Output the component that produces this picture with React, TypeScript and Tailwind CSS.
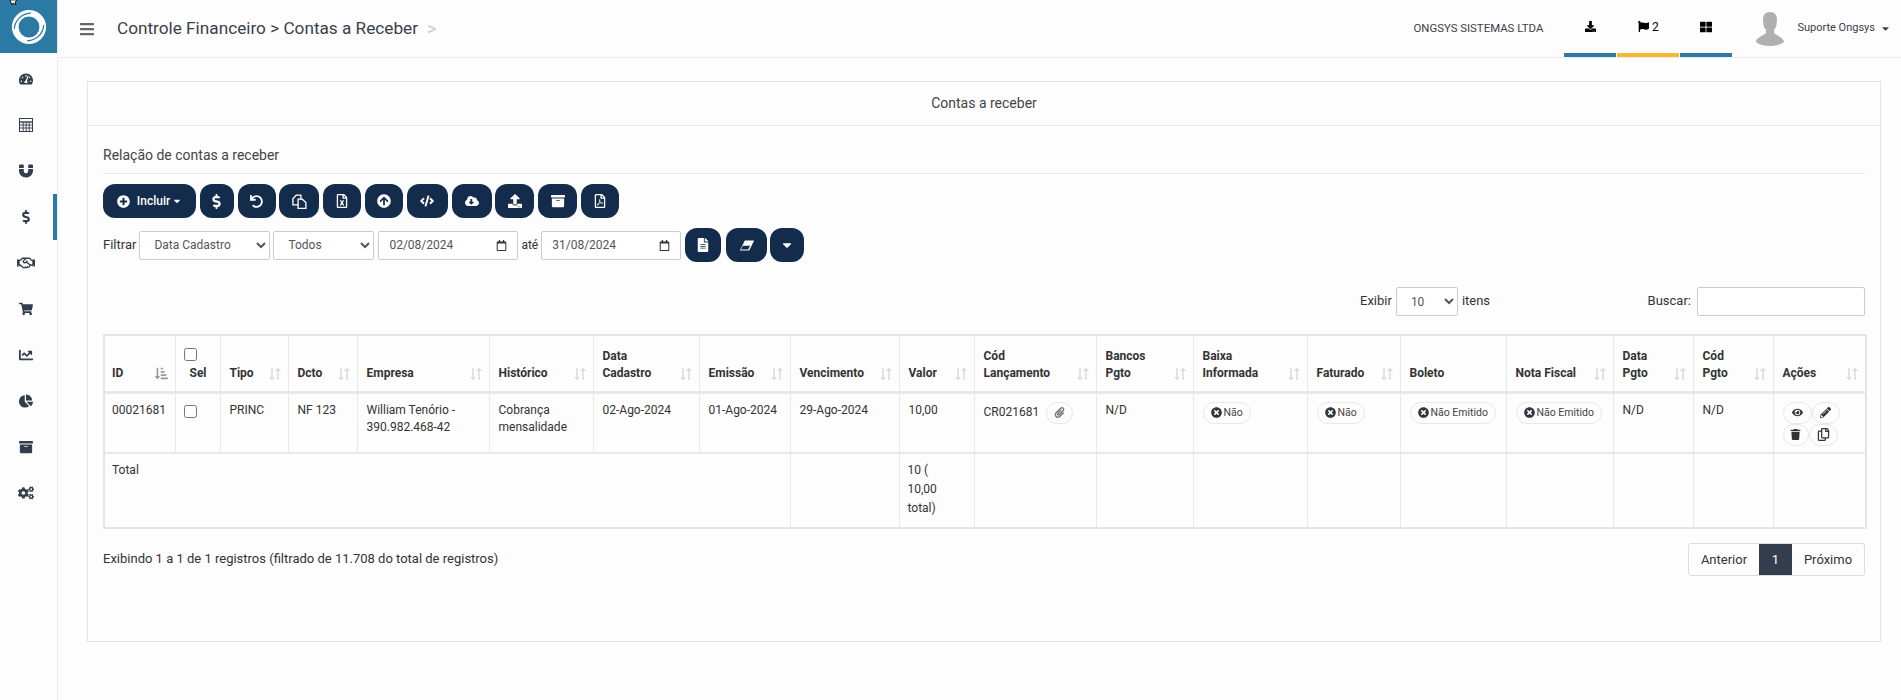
import type { ReactNode } from "react";
import {
  FaArchive,
  FaArrowCircleUp,
  FaBars,
  FaCaretDown,
  FaChartLine,
  FaChartPie,
  FaCloudDownloadAlt,
  FaCode,
  FaCogs,
  FaDollarSign,
  FaDownload,
  FaEye,
  FaFileAlt,
  FaFlag,
  FaMagnet,
  FaPaperclip,
  FaPencilAlt,
  FaPlusCircle,
  FaRegCalendar,
  FaRegCopy,
  FaRegFileExcel,
  FaRegFilePdf,
  FaRegHandshake,
  FaShoppingCart,
  FaTachometerAlt,
  FaThLarge,
  FaTimesCircle,
  FaTrash,
  FaUndo,
  FaUpload,
  FaSortAmountDownAlt,
} from "react-icons/fa";

function CalcIcon() {
  return (
    <svg viewBox="0 0 14 14" className="h-[14px] w-[14px]" fill="none" stroke="currentColor">
      <rect x="0.5" y="0.5" width="13" height="13" strokeWidth="1" />
      <path d="M1 4h12" strokeWidth="1.4" />
      <path d="M1 7h12M1 10h12M4.2 4v9.5M7.2 4v9.5M10.2 4v9.5" strokeWidth="0.9" />
    </svg>
  );
}

function DuplicateIcon() {
  return (
    <svg viewBox="0 0 16 16" className="h-[15px] w-[15px]" fill="none" stroke="#fff" strokeWidth="1.4">
      <path d="M1 5 4.5 1.2H9.5V11.5H1z" />
      <path d="M6.5 5.5h4.5L14.8 9v6.3H6.5z" fill="#132c4c" />
    </svg>
  );
}

function EraserIcon() {
  return (
    <svg viewBox="0 0 18 12" className="h-[11px] w-[16px]">
      <path d="M6.5.5H17l-5.5 11H1z" fill="#fff" />
      <path d="M4.3 6.2h8.2L10.3 10.4H2.3z" fill="#132c4c" />
    </svg>
  );
}

const sideItems = [
  { icon: <FaTachometerAlt />, id: "dash" },
  { icon: <CalcIcon />, id: "calc" },
  { icon: <FaMagnet />, id: "crm" },
  { icon: <FaDollarSign />, id: "fin", active: true },
  { icon: <FaRegHandshake className="text-[18px]" />, id: "deal" },
  { icon: <FaShoppingCart />, id: "cart" },
  { icon: <FaChartLine />, id: "chart" },
  { icon: <FaChartPie />, id: "pie" },
  { icon: <FaArchive />, id: "box" },
  { icon: <FaCogs className="text-[16px]" />, id: "cogs" },
];

const toolbar = [
  { icon: <FaDollarSign className="text-[15px]" />, w: "w-[34px]" },
  { icon: <FaUndo className="text-[13px]" />, w: "w-[38px]" },
  { icon: <DuplicateIcon />, w: "w-[40px]" },
  { icon: <FaRegFileExcel />, w: "w-[38px]" },
  { icon: <FaArrowCircleUp />, w: "w-[38px]" },
  { icon: <FaCode />, w: "w-[41px]" },
  { icon: <FaCloudDownloadAlt />, w: "w-[40px]" },
  { icon: <FaUpload />, w: "w-[39px]" },
  { icon: <FaArchive />, w: "w-[39px]" },
  { icon: <FaRegFilePdf />, w: "w-[38px]" },
];

const colWidths = [
  "w-[71px]",
  "w-[45px]",
  "w-[68px]",
  "w-[69px]",
  "w-[132px]",
  "w-[104px]",
  "w-[106px]",
  "w-[91px]",
  "w-[109px]",
  "w-[75px]",
  "w-[122px]",
  "w-[97px]",
  "w-[114px]",
  "w-[93px]",
  "w-[106px]",
  "w-[107px]",
  "w-[80px]",
  "w-[80px]",
  "w-[93px]",
];

const headers = [
  ["ID"],
  ["Sel"],
  ["Tipo"],
  ["Dcto"],
  ["Empresa"],
  ["Histórico"],
  ["Data", "Cadastro"],
  ["Emissão"],
  ["Vencimento"],
  ["Valor"],
  ["Cód", "Lançamento"],
  ["Bancos", "Pgto"],
  ["Baixa", "Informada"],
  ["Faturado"],
  ["Boleto"],
  ["Nota Fiscal"],
  ["Data", "Pgto"],
  ["Cód", "Pgto"],
  ["Ações"],
];

function SortIcon() {
  return (
    <svg viewBox="0 0 12 14" className="mb-[1px] h-[14px] w-[12px] shrink-0 text-[#dcdcdc]" fill="currentColor">
      <path d="M2.2 1h1.6v9H6l-3 3.4L0 10h2.2z" />
      <path d="M8.2 13h1.6V4H12L9 .6 6 4h2.2z" />
    </svg>
  );
}

function Logo() {
  return (
    <svg viewBox="0 0 40 40" className="h-[38px] w-[38px]" fill="none">
      <path
        fillRule="evenodd"
        d="M20 2a18 18 0 1 0 0 36 18 18 0 0 0 0-36zm0 7a11 11 0 1 1 0 22 11 11 0 0 1 0-22z"
        fill="#fff"
      />
      <path d="M4.5 22C5 14 11 6 22 5.5" stroke="#2a7aa5" strokeWidth="1.3" />
      <path d="M35.5 18C35 26 29 34 18 34.5" stroke="#2a7aa5" strokeWidth="1.3" />
    </svg>
  );
}

function Avatar() {
  return (
    <svg viewBox="0 0 28 34" className="h-[34px] w-[28px]">
      <path
        d="M14 0c5 0 7 3 7 8 0 4-1 8-3 10v3c2 2 8 4 10 8v1c-4 3-9 4-14 4s-10-1-14-4v-1c2-4 8-6 10-8v-3C8 16 7 12 7 8c0-5 2-8 7-8z"
        fill="#b0b0b0"
      />
    </svg>
  );
}

function DarkButton({ children, className }: { children: ReactNode; className: string }) {
  return (
    <button
      type="button"
      className={`flex h-[34px] items-center justify-center rounded-[12px] bg-[#132c4c] text-[14px] text-white ${className}`}
    >
      {children}
    </button>
  );
}

function Pill({ children }: { children: ReactNode }) {
  return (
    <span className="inline-flex h-[22px] items-center gap-[2px] whitespace-nowrap rounded-full border border-[#e8e8e8] px-[7px] text-[10.5px] text-[#444]">
      <FaTimesCircle className="text-[11px] text-[#2f3640]" />
      {children}
    </span>
  );
}

function RoundIcon({ children, className }: { children: ReactNode; className: string }) {
  return (
    <span className={`inline-flex h-[22px] items-center justify-center rounded-full border border-[#e8e8e8] text-[11px] text-[#333] ${className}`}>
      {children}
    </span>
  );
}

function DateField({ value, className }: { value: string; className: string }) {
  return (
    <div className={`flex h-[29px] w-[140px] items-center justify-between rounded-[2px] border border-[#cccccc] bg-white px-[10px] text-[12px] text-[#555] ${className}`}>
      {value}
      <FaRegCalendar className="text-[11px] text-[#333]" />
    </div>
  );
}

const selectClass =
  "h-[29px] rounded-[2px] border border-[#cccccc] bg-white text-[12px] text-[#555] outline-none";

const tdClass = "border border-[#e8e8e8] pl-[9px] pr-[7px] pt-[8px]";
const footClass = "border border-t-2 border-[#e8e8e8]";

export default function App() {
  return (
    <div className="relative flex min-h-screen bg-[#fdfdfd] font-['Roboto',sans-serif] text-[12px] text-[#333]">
      {/* mouse pointer caught in the screenshot */}
      <svg viewBox="0 0 10 5" className="absolute left-[9px] top-0 h-[5px] w-[10px]">
        <path d="M1 0l2 5 1-2 3 2-1-3 2-2z" fill="#fff" stroke="#000" strokeWidth="0.8" />
      </svg>

      <aside className="w-[58px] shrink-0 border-r border-[#ececec]">
        <div className="flex h-[53px] w-[57px] items-center justify-center bg-[#2a7aa5]">
          <Logo />
        </div>
        <nav className="flex flex-col pt-[3px]">
          {sideItems.map((item) => (
            <a
              key={item.id}
              href="#"
              className={`flex h-[46px] w-[57px] items-center justify-center pr-[5px] text-[14px] text-[#343d4e] ${
                item.active ? "border-r-4 border-[#2a7aa5] pr-px" : ""
              }`}
            >
              {item.icon}
            </a>
          ))}
        </nav>
      </aside>

      <div className="min-w-0 flex-1">
        <header className="flex h-[58px] items-center border-b border-[#ececec] pl-[21px] pr-[10px]">
          <FaBars className="text-[16px] text-[#666]" />
          <h1 className="ml-[22px] text-[17.2px] font-normal text-[#3a3f4b]">
            Controle Financeiro &gt; Contas a Receber
          </h1>
          <span className="ml-[9px] text-[18px] text-[#c9c9c9]">&gt;</span>

          <span className="ml-auto text-[11.4px] text-[#3a3f4b]">ONGSYS SISTEMAS LTDA</span>
          <div className="ml-[21px] flex h-full">
            <div className="flex w-[52px] items-center justify-center border-b-4 border-[#2a7aa5] text-[11px] text-black">
              <FaDownload />
            </div>
            <div className="mx-px flex w-[62px] items-center justify-center gap-[3px] border-b-4 border-[#f9b82b] text-[12px] text-black">
              <FaFlag className="text-[11px]" />2
            </div>
            <div className="flex w-[52px] items-center justify-center border-b-4 border-[#2a7aa5] text-[12px] text-black">
              <FaThLarge />
            </div>
          </div>
          <div className="ml-[24px] flex items-center">
            <Avatar />
            <span className="ml-[13px] text-[11px] text-[#3a3f4b]">Suporte Ongsys</span>
            <FaCaretDown className="ml-[5px] text-[11px] text-[#3a3f4b]" />
          </div>
        </header>

        <main className="pb-[24px] pl-[29px] pr-[20px] pt-[23px]">
          <section className="h-[561px] border border-[#e3e3e3]">
            <div className="flex h-[44px] items-center justify-center border-b border-[#e7e7e7] text-[14px] text-[#444]">
              Contas a receber
            </div>
            <div className="px-[15px] pt-[20px]">
              <h2 className="border-b border-[#e7e7e7] pb-[8px] text-[14px] font-normal leading-[19px] text-[#444]">
                Relação de contas a receber
              </h2>

              <div className="mt-[10px] flex gap-[3.8px]">
                <DarkButton className="w-[93px] gap-[7px]">
                  <FaPlusCircle className="text-[13px]" />
                  <span className="flex items-center gap-[2px] text-[12px] font-medium">
                    Incluir
                    <FaCaretDown className="text-[10px]" />
                  </span>
                </DarkButton>
                {toolbar.map((tool, i) => (
                  <DarkButton key={i} className={tool.w}>
                    {tool.icon}
                  </DarkButton>
                ))}
              </div>

              <div className="mt-[10px] flex items-center">
                <span className="mr-[3px] text-[13px]">Filtrar</span>
                <select defaultValue="Data Cadastro" className={`${selectClass} w-[131px] pl-[10px]`}>
                  <option>Data Cadastro</option>
                </select>
                <select defaultValue="Todos" className={`${selectClass} ml-[3px] w-[101px] pl-[10px]`}>
                  <option>Todos</option>
                </select>
                <DateField value="02/08/2024" className="ml-[4px]" />
                <span className="mx-[3px] text-[12px]">até</span>
                <DateField value="31/08/2024" className="" />
                <DarkButton className="ml-[4px] w-[36px]">
                  <FaFileAlt />
                </DarkButton>
                <DarkButton className="ml-[5px] w-[41px]">
                  <EraserIcon />
                </DarkButton>
                <DarkButton className="ml-[3px] w-[34px]">
                  <FaCaretDown />
                </DarkButton>
              </div>

              <div className="mt-[25px] flex h-[30px] items-start text-[13px]">
                <span className="ml-[1257px] pt-[4px]">Exibir</span>
                <select defaultValue="10" className={`${selectClass} ml-[4px] w-[62px] pl-[10px]`}>
                  <option>10</option>
                </select>
                <span className="ml-[4px] pt-[4px]">itens</span>
                <span className="ml-auto pt-[4px]">Buscar:</span>
                <input type="text" className={`${selectClass} ml-[6px] w-[168px]`} />
              </div>

              <table className="mt-[17px] w-[1762px] table-fixed border-collapse border-2 border-[#e4e4e4] text-[12px]">
                <colgroup>
                  {colWidths.map((w, i) => (
                    <col key={i} className={w} />
                  ))}
                </colgroup>
                <thead>
                  <tr className="h-[57px]">
                    {headers.map((lines, i) => (
                      <th
                        key={lines.join("-") + i}
                        className={`border border-b-[3px] border-[#e8e8e8] pb-[9px] pr-[7px] align-bottom text-left font-bold leading-[17px] text-[#333] ${
                          i === 0 ? "pl-[7px]" : "pl-[9px]"
                        }`}
                      >
                        {i === 1 ? (
                          <div className="flex flex-col items-start">
                            <input type="checkbox" className="mb-[4px] ml-[-1px] h-[13px] w-[13px]" />
                            <span className="ml-[5px]">Sel</span>
                          </div>
                        ) : (
                          <div className="flex items-end justify-between">
                            <span>
                              {lines.map((line) => (
                                <span key={line} className="block">
                                  {line}
                                </span>
                              ))}
                            </span>
                            {i === 0 ? (
                              <FaSortAmountDownAlt className="mb-[2px] text-[13px] text-[#9a9a9a]" />
                            ) : (
                              i !== 14 && <SortIcon />
                            )}
                          </div>
                        )}
                      </th>
                    ))}
                  </tr>
                </thead>
                <tbody>
                  <tr className="h-[61px] align-top leading-[17px]">
                    <td className="border border-[#e8e8e8] pl-[7px] pr-[4px] pt-[8px]">00021681</td>
                    <td className={tdClass}>
                      <input type="checkbox" className="ml-[-1px] mt-[3px] h-[13px] w-[13px]" />
                    </td>
                    <td className={tdClass}>PRINC</td>
                    <td className={tdClass}>NF 123</td>
                    <td className={tdClass}>William Tenório - 390.982.468-42</td>
                    <td className={tdClass}>Cobrança mensalidade</td>
                    <td className={tdClass}>02-Ago-2024</td>
                    <td className={tdClass}>01-Ago-2024</td>
                    <td className={tdClass}>29-Ago-2024</td>
                    <td className={tdClass}>10,00</td>
                    <td className={tdClass}>
                      <div className="flex items-center gap-[7px]">
                        CR021681
                        <RoundIcon className="w-[27px]">
                          <FaPaperclip className="text-[#777]" />
                        </RoundIcon>
                      </div>
                    </td>
                    <td className={tdClass}>N/D</td>
                    <td className={tdClass}>
                      <Pill>Não</Pill>
                    </td>
                    <td className={tdClass}>
                      <Pill>Não</Pill>
                    </td>
                    <td className={tdClass}>
                      <Pill>Não Emitido</Pill>
                    </td>
                    <td className={tdClass}>
                      <Pill>Não Emitido</Pill>
                    </td>
                    <td className={tdClass}>N/D</td>
                    <td className={tdClass}>N/D</td>
                    <td className={tdClass}>
                      <div className="flex flex-wrap">
                        <RoundIcon className="w-[29px]">
                          <FaEye />
                        </RoundIcon>
                        <RoundIcon className="w-[28px]">
                          <FaPencilAlt />
                        </RoundIcon>
                        <RoundIcon className="w-[26px]">
                          <FaTrash />
                        </RoundIcon>
                        <RoundIcon className="w-[29px]">
                          <FaRegCopy className="text-[13px]" />
                        </RoundIcon>
                      </div>
                    </td>
                  </tr>
                </tbody>
                <tfoot>
                  <tr className="h-[75px] align-top leading-[19px]">
                    <td colSpan={8} className={`${footClass} pl-[7px] pt-[7px]`}>
                      Total
                    </td>
                    <td className={footClass} />
                    <td className={`${footClass} pl-[8px] pt-[7px]`}>
                      10 (
                      <br />
                      10,00
                      <br />
                      total)
                    </td>
                    {Array.from({ length: 9 }).map((_, i) => (
                      <td key={i} className={footClass} />
                    ))}
                  </tr>
                </tfoot>
              </table>

              <div className="mt-[14px] flex items-start justify-between">
                <span className="pt-[6px] text-[13px]">Exibindo 1 a 1 de 1 registros (filtrado de 11.708 do total de registros)</span>
                <div className="flex h-[33px] overflow-hidden rounded-[3px] border border-[#dddddd] text-[13px]">
                  <span className="flex w-[70px] items-center justify-center">Anterior</span>
                  <span className="flex w-[33px] items-center justify-center bg-[#343d4e] text-white">1</span>
                  <span className="flex w-[72px] items-center justify-center">Próximo</span>
                </div>
              </div>
            </div>
          </section>
        </main>
      </div>
    </div>
  );
}
